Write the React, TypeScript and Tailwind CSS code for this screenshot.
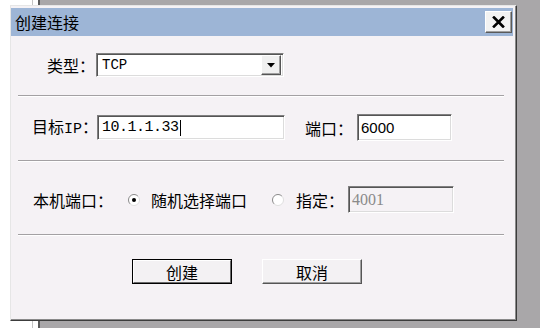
import React from 'react';

const cjk = "font-['Noto_Sans_CJK_SC','Noto_Sans_CJK_JP',sans-serif]";

function Radio({ checked }: { checked?: boolean }) {
  return (
    <svg width="12" height="12" viewBox="0 0 12 12" className="shrink-0">
      <circle cx="6" cy="6" r="5.5" fill="#ffffff" />
      <path d="M2.1 9.9 A5.5 5.5 0 0 1 9.9 2.1" fill="none" stroke="#8a8a8a" strokeWidth="1" />
      <path d="M9.9 2.1 A5.5 5.5 0 0 1 2.1 9.9" fill="none" stroke="#dedede" strokeWidth="1" />
      {checked && <circle cx="6" cy="6" r="2" fill="#000000" />}
    </svg>
  );
}

function Separator() {
  return <div className="ml-[7px] mr-[9px] h-[2px] border-t border-b border-t-[#a3a1a3] border-b-white" />;
}

const sunken =
  'border border-t-[#808080] border-l-[#808080] border-b-white border-r-white shadow-[inset_1px_1px_0_#555555,inset_-1px_-1px_0_#dcdcdc]';

export default function App() {
  return (
    <div className="relative w-[540px] h-[328px] overflow-hidden flex bg-[#a9a7a9]">
      {/* desktop behind the dialog */}
      <div className="w-[32px] h-full bg-white" />
      <div className="w-[1px] h-full bg-[#c4c4c4]" />
      <div className="w-[5px] h-full bg-white" />
      <div className="w-[2px] h-full bg-[#5a5a5a]" />
      <div className="flex-1 h-full bg-[#a9a7a9]" />

      {/* dialog window */}
      <div className="absolute left-[10px] top-[5px] w-[507px] h-[316px] flex flex-col bg-[#f5f2f5] border border-t-[#e6e6e6] border-l-[#e6e6e6] border-r-[#3c3c3c] border-b-[#3c3c3c] shadow-[inset_-1px_-1px_0_#8a8a8a] pt-[2px] pr-[3px]">
        {/* title bar */}
        <div className="h-[28px] flex items-center justify-between bg-[#9db5d6] pl-[4px] pr-[1px]">
          <span className={`${cjk} text-[16px] leading-none text-black`}>创建连接</span>
          <div className="w-[27px] h-[22px] flex items-center justify-center bg-[#f2f2f2] border border-t-white border-l-white border-r-[#5a5a5a] border-b-[#5a5a5a] shadow-[inset_-1px_-1px_0_#a0a0a0]">
            <svg width="13" height="12" viewBox="0 0 13 12">
              <path d="M2 1.5 L11 10.5 M11 1.5 L2 10.5" stroke="#000" strokeWidth="2.6" strokeLinecap="square" />
            </svg>
          </div>
        </div>

        {/* client area */}
        <div className={`${cjk} flex flex-col text-[16px] leading-none text-black`}>
          {/* type */}
          <div className="mt-[17px] h-[24px] flex items-center pl-[36px]">
            <span className="w-[49px] shrink-0 whitespace-nowrap">类型：</span>
            <div className={`w-[188px] h-[24px] flex items-center justify-between bg-white ${sunken} pl-[5px] pr-[2px]`}>
              <span className="font-['Liberation_Mono',monospace] text-[14px]">TCP</span>
              <div className="w-[20px] h-[20px] flex items-center justify-center bg-[#f0f0f0] border border-t-white border-l-white border-r-[#555] border-b-[#555] shadow-[inset_-1px_-1px_0_#a0a0a0]">
                <svg width="8" height="5" viewBox="0 0 8 5">
                  <path d="M0 0 H8 L4 4.5 Z" fill="#000" />
                </svg>
              </div>
            </div>
          </div>

          <div className="mt-[18px]">
            <Separator />
          </div>

          {/* target ip / port */}
          <div className="mt-[17px] h-[27px] flex items-center pl-[21px]">
            <span className="w-[65px] shrink-0 whitespace-nowrap">
              目标<span className="font-['Liberation_Mono',monospace] text-[15px]">IP</span>：
            </span>
            <div className={`w-[188px] h-[25px] shrink-0 flex items-center bg-white ${sunken} pl-[4px]`}>
              <span className="font-['Liberation_Mono',monospace] text-[15px] tracking-[-0.5px]">10.1.1.33</span>
              <span className="w-[1px] h-[16px] bg-black ml-[1px]" />
            </div>
            <span className="ml-[20px] w-[52px] shrink-0 whitespace-nowrap">端口：</span>
            <div className={`w-[95px] h-[27px] shrink-0 flex items-center bg-white ${sunken} pl-[3px]`}>
              <span className="font-['Liberation_Sans',sans-serif] text-[15px]">6000</span>
            </div>
          </div>

          <div className="mt-[19px]">
            <Separator />
          </div>

          {/* local port */}
          <div className="mt-[24px] h-[27px] flex items-center pl-[22px]">
            <span className="w-[95px] shrink-0 whitespace-nowrap">本机端口：</span>
            <Radio checked />
            <span className="ml-[11px] whitespace-nowrap">随机选择端口</span>
            <span className="ml-[25px]">
              <Radio />
            </span>
            <span className="ml-[12px] w-[52px] shrink-0 whitespace-nowrap">指定：</span>
            <div className={`w-[106px] h-[27px] shrink-0 flex items-center bg-[#f5f2f5] ${sunken} pl-[3px]`}>
              <span className="font-['Liberation_Serif',serif] text-[16px] text-[#8a8a8a]">4001</span>
            </div>
          </div>

          <div className="mt-[21px]">
            <Separator />
          </div>

          {/* buttons */}
          <div className="mt-[23px] h-[25px] flex items-center pl-[121px] gap-[30px]">
            <div className="w-[100px] h-[25px] border border-black">
              <div className="w-full h-full flex items-center justify-center bg-[#f3f1f3] border border-t-white border-l-white border-r-[#6a6a6a] border-b-[#6a6a6a]">
                创建
              </div>
            </div>
            <div className="w-[100px] h-[25px] flex items-center justify-center bg-[#f3f1f3] border border-t-white border-l-white border-r-[#555] border-b-[#555] shadow-[inset_-1px_-1px_0_#a0a0a0]">
              取消
            </div>
          </div>
        </div>
      </div>
    </div>
  );
}
